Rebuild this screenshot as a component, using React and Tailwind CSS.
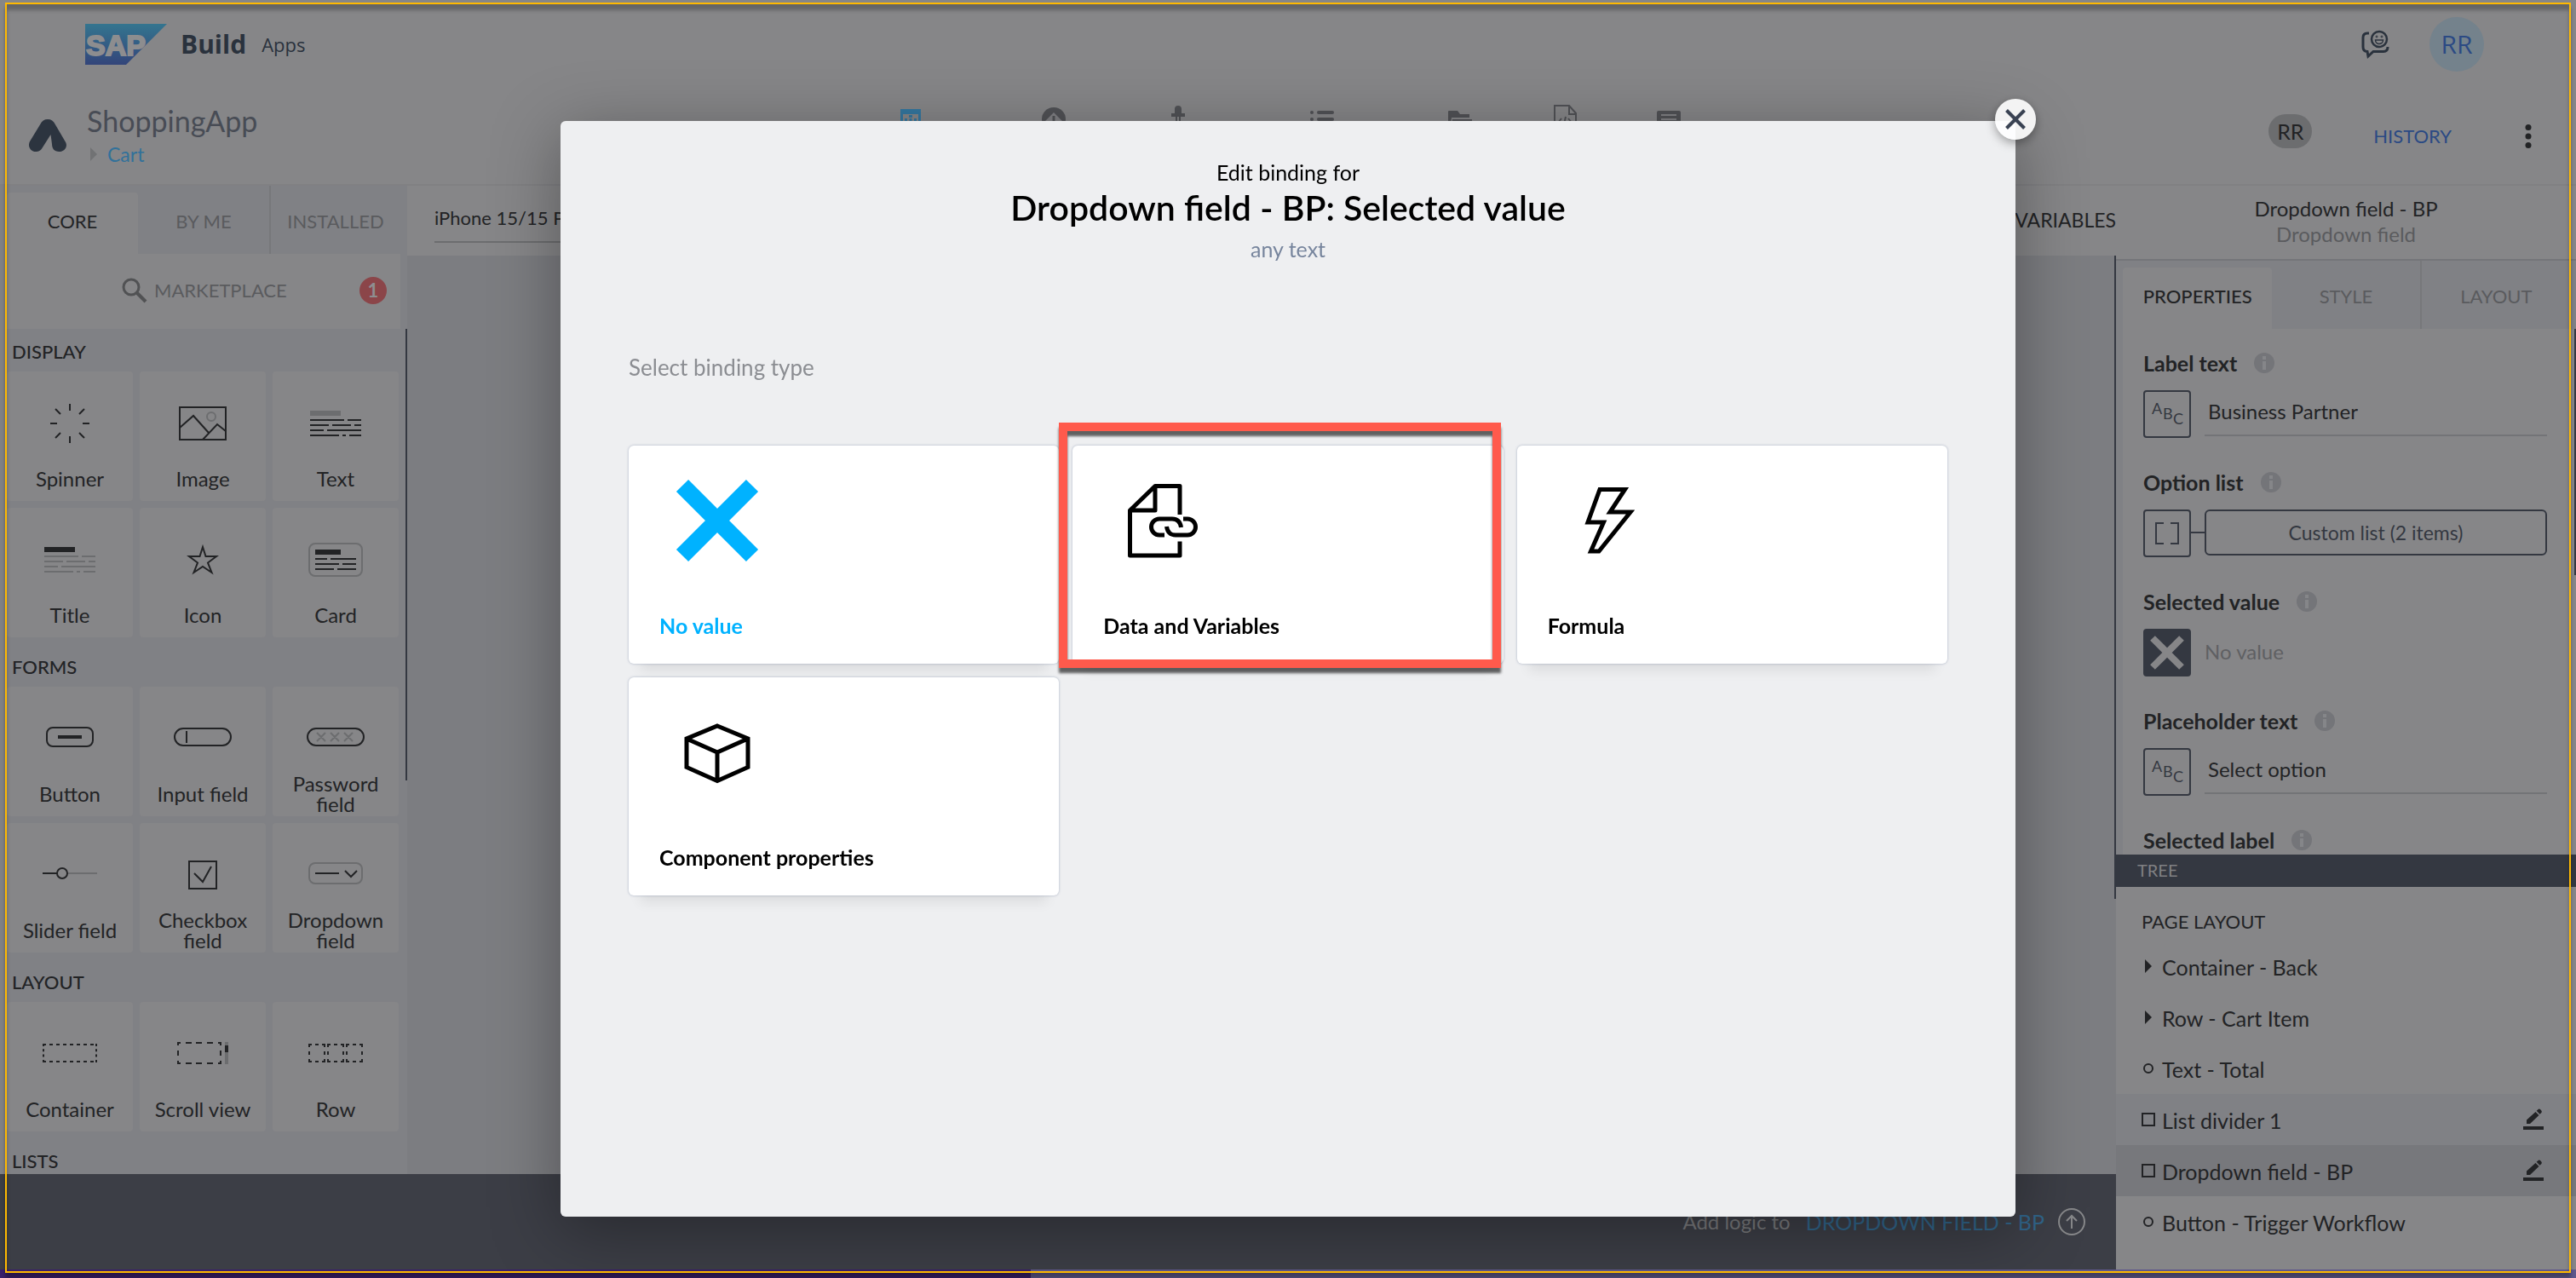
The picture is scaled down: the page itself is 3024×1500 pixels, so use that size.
import React from "react";

const ink = "#222325";
const faint = "#6c6d6f";

/* ---------- Component tile icons ---------- */

function SpinnerIcon() {
  return (
    <svg width="48" height="48" viewBox="0 0 48 48" stroke={ink} strokeWidth="2" fill="none">
      <path d="M24 1v8M24 39v8M1 24h8M39 24h8M7 7l6 6M35 35l6 6M41 7l-6 6M13 35l-6 6" />
    </svg>
  );
}

function ImageIcon() {
  return (
    <svg width="56" height="40" viewBox="0 0 56 40" stroke={ink} strokeWidth="2" fill="none">
      <rect x="1" y="1" width="54" height="38" />
      <path d="M1 25L17 11L35 31M28 39L45 21L55 29" />
      <circle cx="38" cy="12" r="5" stroke={faint} />
    </svg>
  );
}

function TextLines({ head, body }) {
  return (
    <svg width="60" height="32" viewBox="0 0 60 32" fill="none">
      <rect x="0" y="1" width="36" height="6" fill={head} />
      <path
        d="M0 12H40M44 12H60M0 18H22M26 18H48M52 18H60M0 24H16M20 24H60M0 30H34M38 30H42M46 30H60"
        stroke={body}
        strokeWidth="2"
      />
    </svg>
  );
}

function StarIcon() {
  return (
    <svg width="38" height="38" viewBox="0 0 38 38" stroke={ink} strokeWidth="2" fill="none">
      <path d="M19 4L22.5 15H35L25 22.5L29.5 34L19 27L8.500 34L13 22.500L3 15H15.500Z" />
    </svg>
  );
}

function CardIcon() {
  return (
    <svg width="64" height="40" viewBox="0 0 64 40" fill="none">
      <rect x="1" y="1" width="62" height="38" rx="7" stroke={faint} strokeWidth="2" />
      <rect x="8" y="8" width="30" height="6" fill={ink} />
      <path d="M8 19H22M26 19H56M8 25H36M40 25H56M8 31H30M34 31H56" stroke={ink} strokeWidth="2" />
    </svg>
  );
}

function ButtonIcon() {
  return (
    <svg width="56" height="28" viewBox="0 0 56 28" fill="none">
      <rect x="1" y="1" width="54" height="22" rx="7" stroke={ink} strokeWidth="2" />
      <rect x="14" y="10" width="28" height="4" fill={ink} />
    </svg>
  );
}

function InputIcon() {
  return (
    <svg width="68" height="26" viewBox="0 0 68 26" fill="none" stroke={ink} strokeWidth="2">
      <rect x="1" y="1" width="66" height="20" rx="10" />
      <path d="M15 4V18" />
    </svg>
  );
}

function PasswordIcon() {
  return (
    <svg width="68" height="26" viewBox="0 0 68 26" fill="none" strokeWidth="2">
      <rect x="1" y="1" width="66" height="20" rx="10" stroke={ink} />
      <path
        d="M12 6l10 10M22 6l-10 10M28 6l10 10M38 6l-10 10M44 6l10 10M54 6l-10 10"
        stroke={faint}
      />
    </svg>
  );
}

function SliderIcon() {
  return (
    <svg width="64" height="18" viewBox="0 0 64 18" fill="none" strokeWidth="2">
      <path d="M0 7H17" stroke={ink} />
      <path d="M29 7H64" stroke={faint} />
      <circle cx="23" cy="7" r="6" stroke={ink} />
    </svg>
  );
}

function CheckboxIcon() {
  return (
    <svg width="34" height="34" viewBox="0 0 34 34" fill="none" stroke={ink} strokeWidth="2">
      <rect x="1" y="1" width="32" height="32" />
      <path d="M7 15L17 25L27 7" />
    </svg>
  );
}

function DropdownIcon() {
  return (
    <svg width="64" height="30" viewBox="0 0 64 30" fill="none" strokeWidth="2">
      <rect x="1" y="1" width="62" height="24" rx="7" stroke={faint} />
      <path d="M8 13H36M43 10L50 17L57 10" stroke={ink} />
    </svg>
  );
}

function ContainerIcon() {
  return (
    <svg width="64" height="24" viewBox="0 0 64 24" fill="none" stroke={ink} strokeWidth="2">
      <path d="M0 1H64M0 21H64" strokeDasharray="4 4" />
      <path d="M1 0V22M63 0V22" strokeDasharray="3 3.300" />
    </svg>
  );
}

function ScrollIcon() {
  return (
    <svg width="60" height="28" viewBox="0 0 60 28" fill="none" stroke={ink} strokeWidth="2">
      <path d="M0 1H4M10 1H17M22 1H29M35 1H42M48 1H52M0 25H4M10 25H17M22 25H29M35 25H42M48 25H52" />
      <path d="M1 0V4M1 10V16M1 22V26M51 0V4M51 10V16M51 22V26" />
      <rect x="56" y="0" width="4" height="26" fill={faint} stroke="none" />
      <rect x="56" y="4" width="4" height="8" fill={ink} stroke="none" />
    </svg>
  );
}

function RowIcon() {
  return (
    <svg width="64" height="24" viewBox="0 0 64 24" fill="none" stroke={ink} strokeWidth="2">
      {[0, 22, 44].map((x) => (
        <path
          key={x}
          d={`M${x} 1h4m4 0h4m4 0h4M${x} 21h4m4 0h4m4 0h4M${x + 1} 0v4m0 5v4m0 5v4M${x + 19} 0v4m0 5v4m0 5v4`}
        />
      ))}
    </svg>
  );
}

const sections = [
  {
    title: "DISPLAY",
    tiles: [
      ["Spinner", <SpinnerIcon />],
      ["Image", <ImageIcon />],
      ["Text", <TextLines head={faint} body={ink} />],
      ["Title", <TextLines head={ink} body={faint} />],
      ["Icon", <StarIcon />],
      ["Card", <CardIcon />],
    ],
  },
  {
    title: "FORMS",
    tiles: [
      ["Button", <ButtonIcon />],
      ["Input field", <InputIcon />],
      ["Password field", <PasswordIcon />],
      ["Slider field", <SliderIcon />],
      ["Checkbox field", <CheckboxIcon />],
      ["Dropdown field", <DropdownIcon />],
    ],
  },
  {
    title: "LAYOUT",
    tiles: [
      ["Container", <ContainerIcon />],
      ["Scroll view", <ScrollIcon />],
      ["Row", <RowIcon />],
    ],
  },
  { title: "LISTS", tiles: [] },
];

/* ---------- Header ---------- */

function SapLogo() {
  return (
    <svg width="96" height="48" viewBox="0 0 96 48" role="img" aria-label="SAP">
      <defs>
        <linearGradient id="sap" x1="0" y1="0" x2="0" y2="1">
          <stop offset="0" stopColor="#34758f" />
          <stop offset="1" stopColor="#33457a" />
        </linearGradient>
      </defs>
      <path d="M0 0H96L48 48H0Z" fill="url(#sap)" />
      <text
        x="1"
        y="37"
        fontFamily="Liberation Sans, sans-serif"
        fontWeight="700"
        fontSize="34"
        fill="#8d8d8f"
        stroke="#8d8d8f"
        strokeWidth="2"
      >
        SAP
      </text>
    </svg>
  );
}

function TopBar() {
  return (
    <div className="flex h-[104px] shrink-0 items-center pl-[100px] pr-[108px]">
      <SapLogo />
      <span className="ml-4 text-[30px] leading-9 font-bold text-[#2a323d] [font-family:'Open_Sans',sans-serif]">
        Build
      </span>
      <span className="ml-[18px] text-[22px] leading-9 text-[#2a323d] [font-family:'Open_Sans',sans-serif]">
        Apps
      </span>
      <button type="button" aria-label="Feedback" className="ml-auto">
        <svg width="34" height="34" viewBox="0 0 34 34" fill="none" stroke="#2a323d" strokeWidth="3">
          <path d="M9 4H7Q2 4 2 9V20Q2 25.500 7 25.500L8 31L14 25.500H26Q31 25.500 31 20" />
          <circle cx="21" cy="11" r="9" strokeWidth="2.500" />
          <path d="M16.500 12a4.500 4.500 0 0 0 9 0Z" strokeWidth="1.500" />
          <circle cx="18" cy="8" r="1" strokeWidth="1" />
          <circle cx="24" cy="8" r="1" strokeWidth="1" />
        </svg>
      </button>
      <button
        type="button"
        className="ml-[46px] size-16 rounded-full bg-[#74828c] text-[30px] leading-9 text-[#2b4a84] [font-family:'Open_Sans',sans-serif]"
      >
        RR
      </button>
    </div>
  );
}

const navIcons = [
  [
    "UI canvas",
    <g fill="#3477a0">
      <path d="M2 6H26V36H23V12H5V36H2Z" />
      <rect x="12" y="13" width="4" height="3" />
      <path d="M7 17h3v6H7zM12.500 17h3v6h-3zM18 17h3v6h-3z" />
    </g>,
  ],
  [
    "Launch",
    <g>
      <circle cx="14" cy="18" r="14" fill="#515256" />
      <path d="M14 10L4 20H10V30H18V20H24Z" fill="#818184" />
      <path d="M14 14V30" stroke="#515256" strokeWidth="3" />
    </g>,
  ],
  [
    "Theme",
    <g fill="#515256">
      <path d="M10 6q0-4 4-4t4 4v5h4v4H6v-4h4z" />
      <path d="M11 15h2v20h-2zM15 15h2v20h-2z" />
    </g>,
  ],
  [
    "Navigation",
    <g fill="#515256">
      <rect x="0" y="8" width="4" height="4" rx="2" />
      <rect x="8" y="8" width="20" height="4" rx="2" />
      <rect x="0" y="16" width="4" height="4" rx="2" />
      <rect x="8" y="16" width="20" height="4" rx="2" />
    </g>,
  ],
  [
    "Files",
    <g fill="#515256">
      <path d="M0 9q0-1 1-1H11l3 4H25v4H4L2 30H0z" />
      <path d="M5 18H28V30H3z" />
    </g>,
  ],
  [
    "Code",
    <g fill="none" stroke="#515256" strokeWidth="2">
      <path d="M1 36V2H18L26 11V36M18 2V12H26" />
      <path d="M9 17L5 22M14 15L12 24M17 17L21 22" />
    </g>,
  ],
  [
    "Data",
    <g>
      <rect x="0" y="8" width="28" height="28" rx="2" fill="#515256" />
      <path d="M5 13H23M5 18H23" stroke="#818184" strokeWidth="2" />
    </g>,
  ],
];

function AppBar() {
  return (
    <header className="flex h-[114px] shrink-0 items-start border-b-2 border-[#808083] pr-8">
      <div className="flex flex-1 items-start pl-[34px]">
        <svg className="mt-9 shrink-0" width="44" height="38" viewBox="0 0 44 38" fill="#2c343f">
          <path d="M22 0c4 0 7 2 8.500 5.500L42.500 26c4 6-1 12-7 12c-6 0-8.500-4-8.500-9L25.500 18L16 33c-2 4-5 5-8 5c-6 0-10-6-7-12L13.500 5.500C15 2 18 0 22 0Z" />
        </svg>
        <div className="ml-6 pt-[18px]">
          <h1 className="text-[34px] leading-10 text-[#484c55]">ShoppingApp</h1>
          <div className="flex items-center gap-3 pt-px pl-1">
            <svg width="8" height="16" viewBox="0 0 8 16" fill="#717274">
              <path d="M0 0L8 8L0 16Z" />
            </svg>
            <a href="#cart" className="text-[23px] leading-9 text-[#31719a]">
              Cart
            </a>
          </div>
        </div>
      </div>
      <nav className="ml-5 grid grid-cols-[168px_146px_169px_162px_124px_121px_28px] pt-[18px]">
        {navIcons.map(([name, drawing]) => (
          <button key={name} type="button" aria-label={name} className="w-7">
            <svg width="28" height="36" viewBox="0 0 28 36">
              {drawing}
            </svg>
          </button>
        ))}
      </nav>
      <div className="flex flex-1 items-center justify-end pt-[28px] pr-[18px]">
        <button
          type="button"
          className="mb-3 h-10 w-[51px] rounded-[20px] bg-[#6c6d6f] text-[25px] leading-10 text-[#222325]"
        >
          RR
        </button>
        <button type="button" className="ml-[72px] text-[22px] leading-[56px] text-[#2b4a84]">
          HISTORY
        </button>
        <button type="button" aria-label="More" className="ml-[84px]">
          <svg width="12" height="28" viewBox="0 0 12 28" fill="#222325">
            <circle cx="6" cy="3.500" r="3.500" />
            <circle cx="6" cy="14" r="3.500" />
            <circle cx="6" cy="24.500" r="3.500" />
          </svg>
        </button>
      </div>
    </header>
  );
}

/* ---------- Component library ---------- */

function Library() {
  return (
    <aside className="flex w-[478px] shrink-0 flex-col bg-[#808185]">
      <div className="flex h-20 shrink-0 pl-2 text-[22px] leading-8">
        <button type="button" className="mt-2 w-[154px] rounded-t bg-[#868688] pb-1 text-[#222325]">
          CORE
        </button>
        <button type="button" className="w-[156px] border-r-2 border-[#77787b] pt-1 text-[#5a5b5e]">
          BY ME
        </button>
        <button type="button" className="flex-1 pt-1 pr-2 text-[#5a5b5e]">
          INSTALLED
        </button>
      </div>
      <div className="mr-2 ml-2 flex h-[88px] shrink-0 items-center bg-[#868688] pr-4 pb-0.5 pl-[135px]">
        <button type="button" className="flex items-center gap-2 text-[22px] leading-8 text-[#5a5b5e]">
          <svg width="30" height="30" viewBox="0 0 30 30" fill="none" stroke="#515254" strokeWidth="3">
            <circle cx="11" cy="11" r="9" />
            <path d="M17 17L28 28" strokeWidth="4" />
          </svg>
          MARKETPLACE
        </button>
        <span className="ml-auto flex size-8 items-center justify-center rounded-full bg-[#8b4549] text-[22px] leading-8 font-bold text-[#8e8e90]">
          1
        </span>
      </div>
      <div className="relative min-h-0 flex-1 overflow-hidden pr-[10px] pl-2">
        <div className="absolute top-0 right-0 h-[530px] w-[2px] bg-[#343841]" />
        {sections.map((s) => (
          <section key={s.title} className="mb-2">
            <h2 className="h-[50px] pt-[11px] pl-[6px] text-[22px] leading-8 font-medium text-[#222325]">{s.title}</h2>
            <div className="grid grid-cols-3 gap-2">
              {s.tiles.map(([label, icon]) => (
                <button
                  key={label}
                  type="button"
                  className="flex h-[152px] flex-col items-center rounded bg-[#868688] text-[24px] leading-6 text-[#222325]"
                >
                  <span className="flex h-[102px] items-center pt-5">{icon}</span>
                  <span className="flex h-12 items-center">{label}</span>
                </button>
              ))}
            </div>
          </section>
        ))}
      </div>
    </aside>
  );
}

/* ---------- Canvas ---------- */

function Canvas() {
  return (
    <main className="flex min-w-0 flex-1 flex-col">
      <div className="flex h-[82px] shrink-0 items-center justify-between bg-[#868688] pl-8">
        <select
          aria-label="Device"
          className="h-[52px] w-[360px] appearance-none border-b-2 border-[#6c6d6f] pb-1 text-[22px] leading-8 text-[#222325]"
        >
          <option>iPhone 15/15 Pro</option>
        </select>
        <button type="button" className="pb-0.5 text-[23px] leading-8 text-[#222325]">
          VARIABLES
        </button>
      </div>
      <div className="relative flex-1 bg-[#7c7d81]">
        <div className="absolute top-0 right-0 h-[755px] w-[2px] bg-[#343841]" />
      </div>
    </main>
  );
}

function LogicBar() {
  return (
    <footer className="flex h-28 shrink-0 items-center justify-end bg-[#3c3e46] pr-9">
      <span className="text-[24px] leading-8 text-[#78797c]">Add logic to</span>
      <button type="button" className="ml-[18px] flex items-center gap-4 text-[25px] leading-8 text-[#31658a]">
        DROPDOWN FIELD - BP
        <svg width="32" height="32" viewBox="0 0 32 32" fill="none" stroke="#87888a" strokeWidth="2">
          <circle cx="16" cy="16" r="15" />
          <path d="M16 24V9M10 15L16 9L22 15" />
        </svg>
      </button>
    </footer>
  );
}

/* ---------- Inspector ---------- */

function InfoIcon() {
  return (
    <svg width="24" height="24" viewBox="0 0 24 24">
      <circle cx="12" cy="12" r="12" fill="#747579" />
      <path d="M10 4H14V8H10ZM10 10H14V20H10Z" fill="#858689" />
    </svg>
  );
}

function AbcIcon() {
  return (
    <svg width="52" height="52" viewBox="0 0 52 52" fill="#343841" fontFamily="Lato, sans-serif" fontSize="18">
      <text x="8" y="26">A</text>
      <text x="21" y="32">B</text>
      <text x="33" y="38">C</text>
    </svg>
  );
}

function Field({ label, htmlFor, children }) {
  return (
    <div className="mb-[38px]">
      <div className="mb-[18px] flex h-[28px] items-center gap-5">
        <label htmlFor={htmlFor} className="text-[25px] leading-[28px] font-bold text-[#222325]">
          {label}
        </label>
        <InfoIcon />
      </div>
      {children && <div className="flex h-14 items-start">{children}</div>}
    </div>
  );
}

function TypeButton({ name, children }) {
  return (
    <button
      type="button"
      aria-label={name}
      className="flex size-14 shrink-0 items-center justify-center rounded border-2 border-[#343841]"
    >
      {children}
    </button>
  );
}

const inputClass =
  "ml-4 h-[54px] min-w-0 flex-1 border-b-2 border-[#737477] px-1 pb-1 text-[24px] leading-8 text-[#222325] outline-none";

const treeRows = [
  ["Container - Back", "arrow"],
  ["Row - Cart Item", "arrow"],
  ["Text - Total", "dot"],
  ["List divider 1", "box", "bg-[#808185]"],
  ["Dropdown field - BP", "box", "bg-[#77787c]"],
  ["Button - Trigger Workflow", "dot"],
];

function TreeGlyph({ kind }) {
  return (
    <svg className="shrink-0" width="16" height="16" viewBox="0 0 16 16" fill="none" stroke={ink} strokeWidth="2">
      {kind === "arrow" && <path d="M4 0L12 8L4 16Z" fill={ink} stroke="none" />}
      {kind === "dot" && <circle cx="8" cy="8" r="5" />}
      {kind === "box" && <rect x="1" y="1" width="14" height="14" />}
    </svg>
  );
}

function Inspector() {
  return (
    <aside className="flex w-[540px] shrink-0 flex-col bg-[#868688]">
      <div className="h-[88px] shrink-0 border-b-2 border-[#747579] pt-3 text-center text-[24px] leading-[30px]">
        <div className="text-[#222325]">Dropdown field - BP</div>
        <div className="text-[#5a5b5e]">Dropdown field</div>
      </div>
      <div className="grid h-20 shrink-0 grid-cols-3 bg-[#808185] pr-[6px] pl-2 text-[22px] leading-8">
        <button type="button" className="mt-2 rounded-t bg-[#868688] pb-1 font-medium text-[#222325]">
          PROPERTIES
        </button>
        <button type="button" className="border-r-2 border-[#77787b] pt-1 text-[#5a5b5e]">
          STYLE
        </button>
        <button type="button" className="pt-1 text-[#5a5b5e]">
          LAYOUT
        </button>
      </div>
      <div className="relative h-[617px] shrink-0 overflow-hidden border-l-8 border-[#808185] pt-[26px] pr-[34px] pl-6">
        <div className="absolute top-0 right-0 h-[289px] w-[2px] bg-[#343841]" />
        <Field label="Label text" htmlFor="label-text">
          <TypeButton name="Text">
            <AbcIcon />
          </TypeButton>
          <input id="label-text" defaultValue="Business Partner" className={inputClass} />
        </Field>
        <Field label="Option list" htmlFor="option-list">
          <TypeButton name="List">
            <svg width="28" height="26" viewBox="0 0 28 26" fill="none" stroke="#343841" strokeWidth="2">
              <path d="M10 1H1V25H10M18 1H27V25H18" />
            </svg>
          </TypeButton>
          <div className="mt-[26px] w-4 border-t-2 border-[#343841]" />
          <button
            id="option-list"
            type="button"
            className="h-[54px] flex-1 rounded-md border-2 border-[#343841] text-[23px] leading-8 text-[#343841]"
          >
            Custom list (2 items)
          </button>
        </Field>
        <Field label="Selected value" htmlFor="selected-value">
          <button
            id="selected-value"
            type="button"
            className="flex size-14 shrink-0 items-center justify-center rounded bg-[#343841]"
          >
            <svg width="40" height="40" viewBox="0 0 40 40" stroke="#868688" strokeWidth="8">
              <path d="M3 3L37 37M37 3L3 37" />
            </svg>
          </button>
          <span className="ml-4 text-[24px] leading-[54px] text-[#5f6063]">No value</span>
        </Field>
        <Field label="Placeholder text" htmlFor="placeholder-text">
          <TypeButton name="Text">
            <AbcIcon />
          </TypeButton>
          <input id="placeholder-text" defaultValue="Select option" className={inputClass} />
        </Field>
        <Field label="Selected label" />
      </div>
      <h2 className="h-[38px] shrink-0 bg-[#343841] pl-[25px] text-[20px] leading-9 text-[#808083]">TREE</h2>
      <div className="min-h-0 flex-1 overflow-hidden text-[#222325]">
        <h3 className="h-[63px] pt-[25px] pl-[30px] text-[22px] leading-8">PAGE LAYOUT</h3>
        <ul>
          {treeRows.map(([name, kind, tone]) => (
            <li key={name} className={`flex h-[60px] items-center pr-[38px] pl-[30px] ${tone || ""}`}>
              <TreeGlyph kind={kind} />
              <span className="ml-2 pt-0.5 text-[25px] leading-8">{name}</span>
              {kind === "box" && (
                <button type="button" aria-label={`Edit ${name}`} className="ml-auto">
                  <svg width="24" height="26" viewBox="0 0 24 26" fill={ink}>
                    <path d="M4 13.500L14.500 4L18.500 8L8 18H4ZM15.700 2.800L18 .8Q19 .2 20 1L21.700 3Q22 4 21.400 5L19.500 6.800Z" />
                    <rect x="0" y="21" width="24" height="4" />
                  </svg>
                </button>
              )}
            </li>
          ))}
        </ul>
      </div>
    </aside>
  );
}

/* ---------- Binding dialog ---------- */

const bindingTypes = [
  {
    label: "No value",
    tone: "text-[#00b2ff]",
    icon: <path d="M27 23L109 105M109 23L27 105" strokeWidth="20" />,
  },
  {
    label: "Data and Variables",
    tone: "text-black",
    marked: true,
    icon: (
      <g strokeLinejoin="round">
        <path d="M90 57V23.500H61L31.500 52V105H90V88.500M61 23.500V52H31.500" />
        <path d="M72 81H66a9.500 9.500 0 0 1 0-19H81q9 0 10.500 10M94 62H99a9.500 9.500 0 0 1 0 19H85q-9 0-10.500-10" />
      </g>
    ),
  },
  {
    label: "Formula",
    tone: "text-black",
    icon: <path d="M61 27.500H90.500L73 54H97L60 100H50.500L65.500 66H47Z" />,
  },
  {
    label: "Component properties",
    tone: "text-black",
    icon: <path d="M68 33L104 48V81.500L68 97.500L32 81.500V48ZM32 48L68 64L104 48M68 64V97.500" />,
  },
];

function BindingDialog() {
  return (
    <div className="fixed inset-0 flex justify-center pt-[142px] pb-[72px]">
      <div
        role="dialog"
        aria-label="Edit binding"
        className="relative w-full max-w-[1708px] rounded-md bg-[#eeeff1] px-20 pt-11 shadow-[0_16px_80px_rgba(0,0,0,0.35)]"
      >
        <button
          type="button"
          aria-label="Close"
          className="absolute -top-[26px] -right-6 flex size-12 items-center justify-center rounded-full bg-white/90 shadow-[0_4px_12px_rgba(0,0,0,0.35)]"
        >
          <svg width="24" height="24" viewBox="0 0 24 24" stroke="#3a4353" strokeWidth="4">
            <path d="M1.500 1.500L22.500 22.500M22.500 1.500L1.500 22.500" />
          </svg>
        </button>
        <div className="text-center">
          <p className="text-[25px] leading-8 text-black">Edit binding for</p>
          <h2 className="text-[41px] leading-[52px] font-semibold text-black">
            Dropdown field - BP: Selected value
          </h2>
          <p className="text-[25px] leading-[44px] text-[#77859d]">any text</p>
        </div>
        <p className="mt-[101px] text-[26px] leading-8 text-[#8b8d92]">Select binding type</p>
        <div className="mt-[76px] grid grid-cols-3 gap-4">
          {bindingTypes.map((b) => (
            <div key={b.label} className="relative">
              <button
                type="button"
                className={`flex h-64 w-full flex-col items-start rounded-md bg-white pt-6 pl-9 shadow-[0_0_3px_rgba(120,135,165,0.6),0_22px_14px_-14px_rgba(0,0,0,0.08)] ${b.tone}`}
              >
                <svg width="136" height="128" viewBox="0 0 136 128" fill="none" stroke="currentColor" strokeWidth="5">
                  {b.icon}
                </svg>
                <span className="mt-[43px] text-[25px] leading-8 font-bold">{b.label}</span>
              </button>
              {b.marked && (
                <div className="pointer-events-none absolute -top-[27px] right-[3px] -bottom-[5px] -left-4 z-10 border-10 border-[#ff5a4c] shadow-[0_6px_3px_rgba(0,0,0,0.6),inset_0_6px_3px_rgba(0,0,0,0.6)]" />
              )}
            </div>
          ))}
        </div>
      </div>
    </div>
  );
}

export default function App() {
  return (
    <div className="flex h-screen flex-col overflow-hidden bg-[#868688] [font-family:Lato,sans-serif]">
      <TopBar />
      <AppBar />
      <div className="flex min-h-0 flex-1">
        <div className="flex min-w-0 flex-1 flex-col">
          <div className="flex min-h-0 flex-1">
            <Library />
            <Canvas />
          </div>
          <LogicBar />
        </div>
        <Inspector />
      </div>
      <div className="h-[10px] shrink-0 bg-[linear-gradient(90deg,#3a1f6b_40%,#5f588c_40%)]" />
      <BindingDialog />
      <div className="pointer-events-none fixed top-[3px] right-[6px] bottom-[6px] left-[6px] border-2 border-[#ffb900] shadow-[0_6px_4px_rgba(0,0,0,0.3),inset_0_7px_4px_rgba(0,0,0,0.25)]" />
    </div>
  );
}
